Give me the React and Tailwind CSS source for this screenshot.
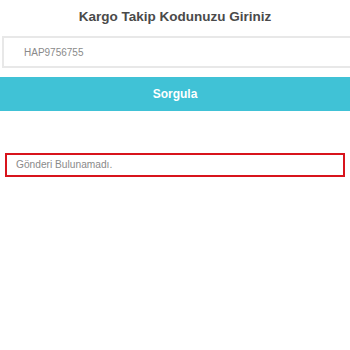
import React from 'react'

export default function App() {
    return (
        <div className="w-[350px] h-[350px] bg-white overflow-hidden" style={{ fontFamily: '"Liberation Sans", Arial, sans-serif' }}>
            <h1 className="h-[36px] pt-[9px] text-center text-[13.5px] font-bold text-[#4a4a4a] leading-[16px]">
                Kargo Takip Kodunuzu Giriniz
            </h1>
            <div className="ml-[2px] w-[360px] h-[32px] border-2 border-[#e8e8e8] flex items-center pl-[20px] text-[10px] text-[#8a8a8a]">
                HAP9756755
            </div>
            <button className="mt-[9px] w-full h-[34px] bg-[#40c2d6] text-white text-[12px] font-bold flex items-center justify-center">
                Sorgula
            </button>
            <div className="mt-[42px] mx-[5px] h-[24px] border-2 border-[#d8141c] flex items-center pl-[9px] text-[10.2px] text-[#8a8a8a]">
                Gönderi Bulunamadı.
            </div>
        </div>
    );
}
